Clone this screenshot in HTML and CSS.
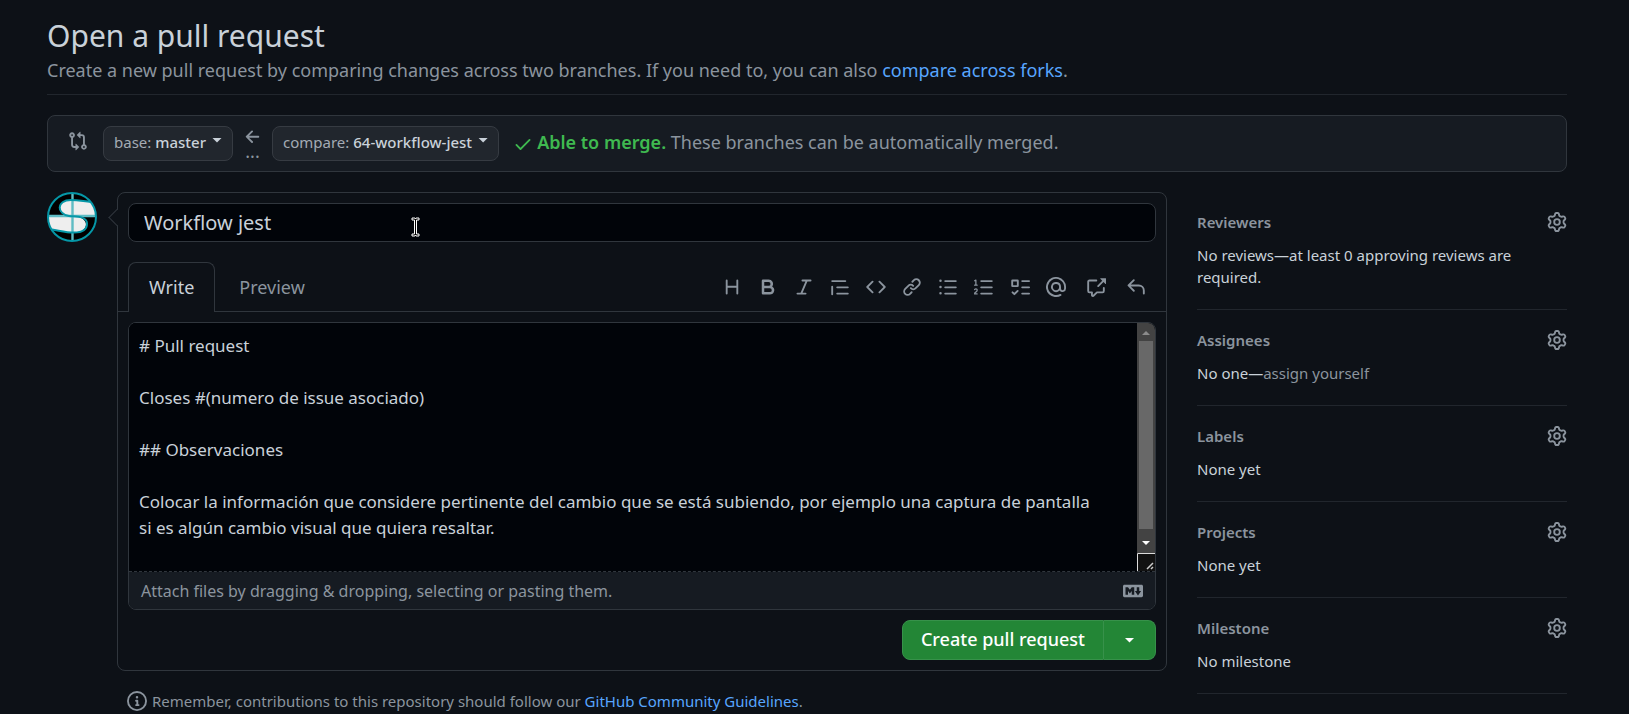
FILE: index.html
```html
<!DOCTYPE html>
<html lang="en">
<head>
<meta charset="utf-8">
<title>Open a pull request</title>
<link rel="stylesheet" href="styles.css">
</head>
<body>
<svg class="sprite" aria-hidden="true">
  <symbol id="gear" viewBox="0 0 16 16"><path d="M8 0a8.2 8.2 0 0 1 .701.031C9.444.095 9.99.645 10.16 1.29l.288 1.107c.018.066.079.158.212.224.231.114.454.243.668.386.123.082.233.09.299.071l1.103-.303c.644-.176 1.392.021 1.82.63.27.385.506.792.704 1.218.315.675.111 1.422-.364 1.891l-.814.806c-.049.048-.098.147-.088.294.016.257.016.515 0 .772-.01.147.038.246.088.294l.814.806c.475.469.679 1.216.364 1.891a7.977 7.977 0 0 1-.704 1.217c-.428.61-1.176.807-1.82.63l-1.102-.302c-.067-.019-.177-.011-.3.071a5.909 5.909 0 0 1-.668.386c-.133.066-.194.158-.211.224l-.29 1.106c-.168.646-.715 1.196-1.458 1.26a8.006 8.006 0 0 1-1.402 0c-.743-.064-1.289-.614-1.458-1.26l-.289-1.106c-.018-.066-.079-.158-.212-.224a5.738 5.738 0 0 1-.668-.386c-.123-.082-.233-.09-.299-.071l-1.103.303c-.644.176-1.392-.021-1.82-.63a8.12 8.12 0 0 1-.704-1.218c-.315-.675-.111-1.422.363-1.891l.815-.806c.05-.048.098-.147.088-.294a6.214 6.214 0 0 1 0-.772c.01-.147-.038-.246-.088-.294l-.815-.806C.635 6.045.431 5.298.746 4.623a7.92 7.92 0 0 1 .704-1.217c.428-.61 1.176-.807 1.82-.63l1.102.302c.067.019.177.011.3-.071.214-.143.437-.272.668-.386.133-.066.194-.158.211-.224l.29-1.106C6.009.645 6.556.095 7.299.03 7.53.01 7.764 0 8 0Zm-.571 1.525c-.036.003-.108.036-.137.146l-.289 1.105c-.147.561-.549.967-.998 1.189-.173.086-.34.183-.5.29-.417.278-.97.423-1.529.27l-1.103-.303c-.109-.03-.175.016-.195.045-.22.312-.412.644-.573.99-.014.031-.021.11.059.19l.815.806c.411.406.562.957.53 1.456a4.709 4.709 0 0 0 0 .582c.032.499-.119 1.05-.53 1.456l-.815.806c-.081.08-.073.159-.059.19.162.346.353.677.573.989.02.03.085.076.195.046l1.102-.303c.56-.153 1.113-.008 1.53.27.161.107.328.204.501.29.447.222.85.629.997 1.189l.289 1.105c.029.109.101.143.137.146a6.6 6.6 0 0 0 1.142 0c.036-.003.108-.036.137-.146l.289-1.105c.147-.561.549-.967.998-1.189.173-.086.34-.183.5-.29.417-.278.97-.423 1.529-.27l1.103.303c.109.029.175-.016.195-.045.22-.313.411-.644.573-.99.014-.031.021-.11-.059-.19l-.815-.806c-.411-.406-.562-.957-.53-1.456a4.709 4.709 0 0 0 0-.582c-.032-.499.119-1.05.53-1.456l.815-.806c.081-.08.073-.159.059-.19a6.464 6.464 0 0 0-.573-.989c-.02-.03-.085-.076-.195-.046l-1.102.303c-.56.153-1.113.008-1.53-.27a4.44 4.44 0 0 0-.501-.29c-.447-.222-.85-.629-.997-1.189l-.289-1.105c-.029-.11-.101-.143-.137-.146a6.6 6.6 0 0 0-1.142 0ZM11 8a3 3 0 1 1-6 0 3 3 0 0 1 6 0ZM9.5 8a1.5 1.5 0 1 0-3.001.001A1.5 1.5 0 0 0 9.5 8Z"/></symbol>
</svg>

<main class="page">
  <header class="page-head">
    <h1 class="title">Open a pull request</h1>
    <p class="subtitle">Create a new pull request by comparing changes across two branches. If you need to, you can also <a class="link" href="#forks">compare across forks</a>.</p>
  </header>

  <section class="range">
    <svg class="icon range-icon" viewBox="0 0 16 16" aria-hidden="true"><path fill-rule="evenodd" d="M9.573.677 7.177 3.073a.25.25 0 0 0 0 .354l2.396 2.396A.25.25 0 0 0 10 5.646V4h1a1 1 0 0 1 1 1v5.628a2.251 2.251 0 1 0 1.5 0V5A2.5 2.5 0 0 0 11 2.5h-1V.854a.25.25 0 0 0-.427-.177ZM6 12v-1.646a.25.25 0 0 1 .427-.177l2.396 2.396a.25.25 0 0 1 0 .354l-2.396 2.396A.25.25 0 0 1 6 15.146V13.5H5A2.5 2.5 0 0 1 2.5 11V5.372a2.25 2.25 0 1 1 1.5 0V11a1 1 0 0 0 1 1h1ZM4 3.25a.75.75 0 1 0-1.5 0 .75.75 0 0 0 1.5 0ZM12.75 12a.75.75 0 1 0 0 1.5.75.75 0 0 0 0-1.5Z"/></svg>
    <button class="branch" type="button"><span>base: <b class="branch-name">master</b></span><span class="caret caret-up"></span></button>
    <div class="direction" aria-hidden="true">
      <svg class="icon" viewBox="0 0 16 16"><path d="M7.78 12.53a.75.75 0 0 1-1.06 0L2.47 8.28a.75.75 0 0 1 0-1.06l4.25-4.25a.751.751 0 0 1 1.042.018.751.751 0 0 1 .018 1.042L4.81 7h7.44a.75.75 0 0 1 0 1.5H4.81l2.97 2.97a.75.75 0 0 1 0 1.06Z"/></svg>
      <span class="dots">...</span>
    </div>
    <button class="branch" type="button"><span>compare: <b class="branch-name">64-workflow-jest</b></span><span class="caret caret-up"></span></button>
    <p class="merge">
      <svg class="icon merge-check" viewBox="0 0 16 16" aria-hidden="true"><path d="M13.78 4.22a.75.75 0 0 1 0 1.06l-7.25 7.25a.75.75 0 0 1-1.06 0L2.22 9.28a.751.751 0 0 1 .018-1.042.751.751 0 0 1 1.042-.018L6 10.94l6.72-6.72a.75.75 0 0 1 1.06 0Z"/></svg>
      <span><strong class="merge-ok">Able to merge.</strong> These branches can be automatically merged.</span>
    </p>
  </section>

  <div class="columns">
    <svg class="avatar" viewBox="0 0 50 50" role="img" aria-label="Avatar">
      <circle cx="25" cy="25" r="24" fill="#000"/>
      <path d="M44 10C37 9.500 32 8 24 8 9 8 9 22 22 24H49C49 19 47 13 44 10ZM1.500 24H24C44 24 43 40.500 27 40.500 19 40.500 12 38.500 5 37.500 2.500 34 1.500 29 1.500 24Z" fill="#eee"/>
      <path d="M25.500 1.500V48.500M1.500 24H48.500" stroke="#5fbcc4" stroke-width="2.400" fill="none"/>
      <path d="M44 10C37 9.500 32 8 24 8 9 8 9.500 22 22 24 27 24.800 40 23.500 40 31.500 40 38.500 34 40.500 27 40.500 19 40.500 12 38.500 5 37.500" stroke="#0597a7" stroke-width="2" fill="none"/>
      <circle cx="25" cy="25" r="24" fill="none" stroke="#0597a7" stroke-width="2"/>
    </svg>

    <div class="main-col">
      <form class="editor">
        <div class="title-field">
          <input class="title-input" type="text" value="Workflow jest" aria-label="Title">
          <svg class="pointer" viewBox="0 0 9 20" aria-hidden="true"><path d="M1 1h3l.5 1 .5-1h3v2H5.500v14H8v2H5l-.5-1-.5 1H1v-2h2.500V3H1Z" fill="#000" stroke="#fff"/></svg>
        </div>
        <div class="tabs">
          <div class="tab-list" role="tablist">
            <button class="tab tab-active" type="button" role="tab">Write</button>
            <button class="tab" type="button" role="tab">Preview</button>
          </div>
          <div class="toolbar">
            <button class="tool" type="button" aria-label="Heading"><svg class="icon" viewBox="0 0 16 16"><path d="M3.750 2a.75.75 0 0 1 .75.75V7h7V2.750a.75.75 0 0 1 1.500 0v10.500a.75.75 0 0 1-1.500 0V8.500h-7v4.750a.75.75 0 0 1-1.500 0V2.750A.75.75 0 0 1 3.750 2Z"/></svg></button>
            <button class="tool" type="button" aria-label="Bold"><svg class="icon" viewBox="0 0 16 16"><path d="M4 2h4.500a3.501 3.501 0 0 1 2.852 5.530A3.499 3.499 0 0 1 9.500 14H4a1 1 0 0 1-1-1V3a1 1 0 0 1 1-1Zm1 7v3h4.500a1.500 1.500 0 0 0 0-3Zm3.500-2a1.500 1.500 0 0 0 0-3H5v3Z"/></svg></button>
            <button class="tool" type="button" aria-label="Italic"><svg class="icon" viewBox="0 0 16 16"><path d="M6 2.750A.75.75 0 0 1 6.750 2h6.500a.75.75 0 0 1 0 1.500h-2.505l-3.858 9H9.250a.75.75 0 0 1 0 1.500h-6.500a.75.75 0 0 1 0-1.500h2.505l3.858-9H6.750A.75.75 0 0 1 6 2.750Z"/></svg></button>
            <button class="tool" type="button" aria-label="Quote"><svg class="icon" viewBox="0 0 16 16"><path d="M1.750 2.500h10.500a.75.75 0 0 1 0 1.500H1.750a.75.75 0 0 1 0-1.500Zm4 5h8.500a.75.75 0 0 1 0 1.500h-8.500a.75.75 0 0 1 0-1.500Zm0 5h8.500a.75.75 0 0 1 0 1.500h-8.500a.75.75 0 0 1 0-1.500ZM2.500 7.750v6a.75.75 0 0 1-1.500 0v-6a.75.75 0 0 1 1.500 0Z"/></svg></button>
            <button class="tool" type="button" aria-label="Code"><svg class="icon" viewBox="0 0 16 16"><path d="m11.280 3.220 4.250 4.250a.75.75 0 0 1 0 1.060l-4.250 4.250a.749.749 0 0 1-1.275-.326.749.749 0 0 1 .215-.734L13.940 8l-3.720-3.720a.749.749 0 0 1 .326-1.275.749.749 0 0 1 .734.215Zm-6.560 0a.751.751 0 0 1 1.042.018.751.751 0 0 1 .018 1.042L2.060 8l3.720 3.720a.749.749 0 0 1-.326 1.275.749.749 0 0 1-.734-.215L.47 8.530a.75.75 0 0 1 0-1.060Z"/></svg></button>
            <button class="tool" type="button" aria-label="Link"><svg class="icon" viewBox="0 0 16 16"><path d="m7.775 3.275 1.250-1.250a3.500 3.500 0 1 1 4.950 4.950l-2.500 2.500a3.500 3.500 0 0 1-4.950 0 .751.751 0 0 1 .018-1.042.751.751 0 0 1 1.042-.018 1.998 1.998 0 0 0 2.830 0l2.500-2.500a2.002 2.002 0 0 0-2.830-2.830l-1.250 1.250a.751.751 0 0 1-1.042-.018.751.751 0 0 1-.018-1.042Zm-4.690 9.640a1.998 1.998 0 0 0 2.830 0l1.250-1.250a.751.751 0 0 1 1.042.018.751.751 0 0 1 .018 1.042l-1.250 1.250a3.500 3.500 0 1 1-4.950-4.950l2.500-2.500a3.500 3.500 0 0 1 4.950 0 .751.751 0 0 1-.018 1.042.751.751 0 0 1-1.042.018 1.998 1.998 0 0 0-2.830 0l-2.500 2.500a1.998 1.998 0 0 0 0 2.830Z"/></svg></button>
            <button class="tool" type="button" aria-label="Bulleted list"><svg class="icon" viewBox="0 0 16 16"><path d="M5.750 2.500h8.500a.75.75 0 0 1 0 1.500h-8.500a.75.75 0 0 1 0-1.500Zm0 5h8.500a.75.75 0 0 1 0 1.500h-8.500a.75.75 0 0 1 0-1.500Zm0 5h8.500a.75.75 0 0 1 0 1.500h-8.500a.75.75 0 0 1 0-1.500ZM2 14a1 1 0 1 1 0-2 1 1 0 0 1 0 2Zm1-6a1 1 0 1 1-2 0 1 1 0 0 1 2 0ZM2 4a1 1 0 1 1 0-2 1 1 0 0 1 0 2Z"/></svg></button>
            <button class="tool" type="button" aria-label="Numbered list"><svg class="icon" viewBox="0 0 16 16"><path d="M5 3.250a.75.75 0 0 1 .75-.75h8.500a.75.75 0 0 1 0 1.500h-8.500A.75.75 0 0 1 5 3.250Zm0 5a.75.75 0 0 1 .75-.75h8.500a.75.75 0 0 1 0 1.500h-8.500A.75.75 0 0 1 5 8.250Zm0 5a.75.75 0 0 1 .75-.75h8.500a.75.75 0 0 1 0 1.500h-8.500a.75.75 0 0 1-.75-.75ZM.924 10.320a.5.5 0 0 1-.851-.525l.001-.001.001-.002.002-.004.007-.011c.097-.144.215-.273.348-.384.228-.19.588-.392 1.068-.392.468 0 .858.181 1.126.484.259.294.377.673.377 1.038 0 .987-.686 1.495-1.156 1.845l-.047.035c-.303.225-.522.4-.654.597h1.357a.5.5 0 0 1 0 1H.5a.5.5 0 0 1-.5-.5c0-1.005.692-1.520 1.167-1.875l.035-.025c.531-.396.8-.625.8-1.078a.57.57 0 0 0-.128-.376C1.806 10.068 1.695 10 1.500 10a.658.658 0 0 0-.429.163.835.835 0 0 0-.144.153ZM2.003 2.500V6h.503a.5.5 0 0 1 0 1H.5a.5.5 0 0 1 0-1h.503V3.308l-.28.14a.5.5 0 0 1-.446-.895l1.003-.5a.5.5 0 0 1 .723.447Z"/></svg></button>
            <button class="tool" type="button" aria-label="Task list"><svg class="icon" viewBox="0 0 16 16"><path fill-rule="evenodd" d="M2 2h4a1 1 0 0 1 1 1v4a1 1 0 0 1-1 1H2a1 1 0 0 1-1-1V3a1 1 0 0 1 1-1Zm4.655 8.595a.75.75 0 0 1 0 1.060L4.030 14.280a.75.75 0 0 1-1.060 0l-1.500-1.500a.749.749 0 0 1 .326-1.275.749.749 0 0 1 .734.215l.97.97 2.095-2.095a.75.75 0 0 1 1.060 0ZM9.750 2.500h5.500a.75.75 0 0 1 0 1.500h-5.500a.75.75 0 0 1 0-1.500Zm0 5h5.500a.75.75 0 0 1 0 1.500h-5.500a.75.75 0 0 1 0-1.500Zm0 5h5.500a.75.75 0 0 1 0 1.500h-5.500a.75.75 0 0 1 0-1.500Zm-7.250-9v3h3v-3Z"/></svg></button>
            <button class="tool" type="button" aria-label="Mention"><svg class="icon" viewBox="0 0 16 16"><path d="M4.750 2.370a6.501 6.501 0 0 0 6.500 11.260.75.75 0 0 1 .75 1.298A7.999 7.999 0 0 1 .989 4.148 8 8 0 0 1 16 7.750v1.500a2.750 2.750 0 0 1-5.072 1.475 3.999 3.999 0 0 1-6.650-4.190A4 4 0 0 1 12 8v1.250a1.250 1.250 0 0 0 2.500 0V7.867a6.500 6.500 0 0 0-9.750-5.496ZM10.500 8a2.500 2.500 0 1 0-5 0 2.500 2.500 0 0 0 5 0Z"/></svg></button>
            <button class="tool tool-wide" type="button" aria-label="Reference"><svg class="icon" viewBox="0 0 16 16"><path d="M2.750 3.500a.25.25 0 0 0-.25.25v7.500c0 .138.112.25.25.25h2a.75.75 0 0 1 .75.75v2.190l2.720-2.720a.749.749 0 0 1 .53-.22h4.500a.25.25 0 0 0 .25-.25v-2.500a.75.75 0 0 1 1.500 0v2.500A1.750 1.750 0 0 1 13.250 13H9.060l-2.573 2.573A1.458 1.458 0 0 1 4 14.543V13H2.750A1.750 1.750 0 0 1 1 11.250v-7.500C1 2.784 1.784 2 2.750 2h5.500a.75.75 0 0 1 0 1.500ZM16 1.250v4.146a.25.25 0 0 1-.427.177L14.030 4.030l-3.750 3.750a.749.749 0 0 1-1.275-.326.749.749 0 0 1 .215-.734l3.750-3.750-1.543-1.543A.25.25 0 0 1 11.604 1h4.146a.25.25 0 0 1 .25.25Z"/></svg></button>
            <button class="tool tool-wide" type="button" aria-label="Saved replies"><svg class="icon" viewBox="0 0 16 16"><path d="M6.780 1.970a.75.75 0 0 1 0 1.060L3.810 6h6.440A4.750 4.750 0 0 1 15 10.750v2.500a.75.75 0 0 1-1.500 0v-2.500a3.250 3.250 0 0 0-3.250-3.250H3.810l2.970 2.970a.749.749 0 0 1-.326 1.275.749.749 0 0 1-.734-.215L1.470 7.280a.75.75 0 0 1 0-1.060l4.250-4.250a.75.75 0 0 1 1.060 0Z"/></svg></button>
          </div>
        </div>
        <div class="body-area">
          <div class="body-box">
            <div class="body-row">
              <textarea class="body-input" aria-label="Description">
# Pull request

Closes #(numero de issue asociado)

## Observaciones

Colocar la información que considere pertinente del cambio que se está subiendo, por ejemplo una captura de pantalla si es algún cambio visual que quiera resaltar.
</textarea>
              <div class="scrollbar" aria-hidden="true">
                <svg class="scroll-arrow" viewBox="0 0 18 18"><path d="M5 12 9 8l4 4Z" fill="#8b8b8b"/></svg>
                <div class="scroll-thumb"></div>
                <svg class="scroll-arrow scroll-down" viewBox="0 0 18 18"><path d="M5 6h8l-4 4Z" fill="#fff"/></svg>
                <svg class="resizer" viewBox="0 0 18 18"><path d="M.5 18V.5H18" fill="none" stroke="#dcdcdc"/><path d="m10 16 6-6m-2 6 2-2" fill="none" stroke="#ccc" stroke-width="1.500"/></svg>
              </div>
            </div>
            <div class="attach">
              <span>Attach files by dragging &amp; dropping, selecting or pasting them.</span>
              <svg class="icon" viewBox="0 0 16 16" aria-hidden="true"><path fill-rule="evenodd" d="M14.850 3c.63 0 1.150.52 1.140 1.150v7.700c0 .63-.51 1.150-1.150 1.150H1.150C.52 13 0 12.480 0 11.840V4.150C0 3.520.52 3 1.150 3ZM9 11V5H7L5.500 7 4 5H2v6h2V8l1.500 1.920L7 8v3Zm2.990.5L14.500 8H13V5h-2v3H9.500Z"/></svg>
            </div>
          </div>
          <div class="submit">
            <button class="create" type="submit">Create pull request</button>
            <button class="create-more" type="button" aria-label="More options"><span class="caret"></span></button>
          </div>
        </div>
      </form>
      <p class="note">
        <svg class="icon" viewBox="0 0 16 16" aria-hidden="true"><path d="M0 8a8 8 0 1 1 16 0A8 8 0 0 1 0 8Zm8-6.500a6.500 6.500 0 1 0 0 13 6.500 6.500 0 0 0 0-13ZM6.500 7.750A.75.75 0 0 1 7.250 7h1a.75.75 0 0 1 .75.75v2.750h.25a.75.75 0 0 1 0 1.500h-2a.75.75 0 0 1 0-1.500h.25v-2h-.25a.75.75 0 0 1-.75-.75ZM8 6a1 1 0 1 1 0-2 1 1 0 0 1 0 2Z"/></svg>
        <span>Remember, contributions to this repository should follow our <a class="link" href="#guidelines">GitHub Community Guidelines</a>.</span>
      </p>
    </div>

    <aside class="sidebar">
      <section class="side-item">
        <div class="side-head"><h2 class="side-title">Reviewers</h2><button class="side-gear" type="button" aria-label="Edit reviewers"><svg class="icon"><use href="#gear"/></svg></button></div>
        <p class="side-text">No reviews—at least 0 approving reviews are required.</p>
      </section>
      <section class="side-item">
        <div class="side-head"><h2 class="side-title">Assignees</h2><button class="side-gear" type="button" aria-label="Edit assignees"><svg class="icon"><use href="#gear"/></svg></button></div>
        <p class="side-text">No one—<a class="muted-link" href="#assign">assign yourself</a></p>
      </section>
      <section class="side-item">
        <div class="side-head"><h2 class="side-title">Labels</h2><button class="side-gear" type="button" aria-label="Edit labels"><svg class="icon"><use href="#gear"/></svg></button></div>
        <p class="side-text">None yet</p>
      </section>
      <section class="side-item">
        <div class="side-head"><h2 class="side-title">Projects</h2><button class="side-gear" type="button" aria-label="Edit projects"><svg class="icon"><use href="#gear"/></svg></button></div>
        <p class="side-text">None yet</p>
      </section>
      <section class="side-item">
        <div class="side-head"><h2 class="side-title">Milestone</h2><button class="side-gear" type="button" aria-label="Edit milestone"><svg class="icon"><use href="#gear"/></svg></button></div>
        <p class="side-text">No milestone</p>
      </section>
    </aside>
  </div>
</main>
</body>
</html>
```
FILE: styles.css
```css
* { box-sizing: border-box; }

body {
  margin: 0;
  background: #0d1117;
  color: #c9d1d9;
  font-family: "Noto Sans", "Liberation Sans", sans-serif;
  font-size: 18px;
  line-height: 26px;
}

h1, h2, p { margin: 0; }
button, input, textarea { font: inherit; color: inherit; }
button { padding: 0; border: 0; background: none; }

.sprite { display: none; }
.icon { display: block; flex: none; width: 20px; height: 20px; fill: #8b949e; }
.link { color: #58a6ff; text-decoration: none; }

.caret {
  width: 10px;
  height: 5px;
  background: currentColor;
  clip-path: polygon(0 0, 100% 0, 50% 100%);
}
.caret-up { margin-bottom: 4px; }

.page { padding: 15px 62px 0 47px; }

.page-head { padding-bottom: 11px; border-bottom: 1px solid #21262d; }
.title { font-size: 30px; font-weight: 400; line-height: 42px; }
.subtitle { color: #8b949e; }

/* Branch range bar */
.range {
  display: flex;
  align-items: center;
  margin-top: 20px;
  padding: 10px 20px;
  border: 1px solid #30363d;
  border-radius: 8px;
  background: #161b22;
}
.range-icon { margin: 0 15px 6px 0; }
.branch {
  display: flex;
  align-items: center;
  gap: 6px;
  height: 35px;
  padding: 0 10px 3px;
  border: 1px solid #363b42;
  border-radius: 8px;
  background: #21262d;
  color: #a4abb4;
  font-size: 15px;
}
.branch-name { color: #c9d1d9; font-weight: 500; }
.branch .caret { color: #c9d1d9; }
.direction {
  display: flex;
  flex-direction: column;
  align-items: center;
  width: 39px;
  color: #8b949e;
}
.dots { height: 14px; line-height: 8px; }
.merge { display: flex; align-items: center; gap: 4px; margin-left: 14px; padding-bottom: 3px; color: #8b949e; }
.merge-check { margin-top: 4px; fill: #3fb950; }
.merge-ok { color: #3fb950; font-weight: 600; }

/* Editor and sidebar */
.columns {
  display: grid;
  grid-template-columns: 50px minmax(0, 1fr) 370px;
  align-items: start;
  margin-top: 20px;
}
.avatar { width: 50px; height: 50px; }
.main-col { padding: 0 30px 0 20px; }
.editor { position: relative; border: 1px solid #30363d; border-radius: 8px; }
.editor::before {
  content: "";
  position: absolute;
  top: 18px;
  left: -7px;
  width: 12px;
  height: 12px;
  border: solid #30363d;
  border-width: 0 0 1px 1px;
  background: linear-gradient(45deg, #0d1117 50%, transparent 50%);
  transform: rotate(45deg);
}
.title-field { position: relative; padding: 10px; }
.title-input {
  display: block;
  width: 100%;
  height: 39px;
  padding: 0 15px;
  border: 1px solid #30363d;
  border-radius: 8px;
  background: #010409;
  font-size: 20px;
}
.pointer { position: absolute; top: 24px; left: 293px; width: 9px; height: 20px; }

.tabs {
  display: flex;
  justify-content: space-between;
  align-items: center;
  margin-top: 10px;
  padding: 0 10px;
  border-bottom: 1px solid #30363d;
}
.tab-list { display: flex; align-self: flex-end; margin-bottom: -1px; }
.tab {
  height: 50px;
  padding: 0 20px 2px;
  border: 1px solid transparent;
  border-bottom: 0;
  border-radius: 8px 8px 0 0;
  color: #8b949e;
}
.tab-active { position: relative; margin-right: 3px; border-color: #30363d; background: #0d1117; color: #c9d1d9; }
.toolbar { display: flex; }
.tool { display: flex; justify-content: center; width: 36px; }
.tool-wide { width: 40px; }
.tool:nth-child(11) { margin-left: 2px; }

.body-area { display: flex; flex-direction: column; gap: 10px; padding: 10px; }
.body-box { overflow: hidden; border: 1px solid #30363d; border-radius: 8px; }
.body-row { display: flex; border-bottom: 1px dashed #30363d; background: #010409; }
.body-input {
  flex: 1;
  min-width: 0;
  height: 248px;
  padding: 10px 40px 10px 10px;
  border: 0;
  background: #010409;
  font-size: 17px;
  resize: none;
}
.scrollbar { display: flex; flex-direction: column; width: 18px; background: #434343; }
.scroll-arrow { display: block; width: 18px; height: 18px; }
.scroll-thumb { flex: 1; margin: 0 2px 6px; background: #686868; }
.resizer { display: block; width: 18px; height: 18px; background: #121212; }
.attach {
  display: flex;
  justify-content: space-between;
  align-items: center;
  padding: 6px 12px 5px;
  background: #161b22;
  color: #8b949e;
  font-size: 16px;
}
.submit { display: flex; justify-content: flex-end; }
.create, .create-more {
  height: 40px;
  border: 1px solid #37914a;
  background: #238636;
  color: #fff;
  font-weight: 500;
}
.create { padding: 0 18px 2px; border-radius: 8px 0 0 8px; }
.create-more { display: grid; place-items: center; width: 52px; border-left: 0; border-radius: 0 8px 8px 0; }

.note { display: flex; align-items: center; gap: 5px; margin: 17px 0 0 10px; color: #8b949e; font-size: 15px; }

.side-item { padding: 19px 0 21px; border-bottom: 1px solid #21262d; font-size: 15px; line-height: 22px; }
.side-head { display: flex; justify-content: space-between; align-items: center; margin-bottom: 11px; }
.side-title { color: #8b949e; font-size: 15px; font-weight: 600; }
.side-text { padding-right: 40px; }
.muted-link { color: #8b949e; text-decoration: none; }
```
